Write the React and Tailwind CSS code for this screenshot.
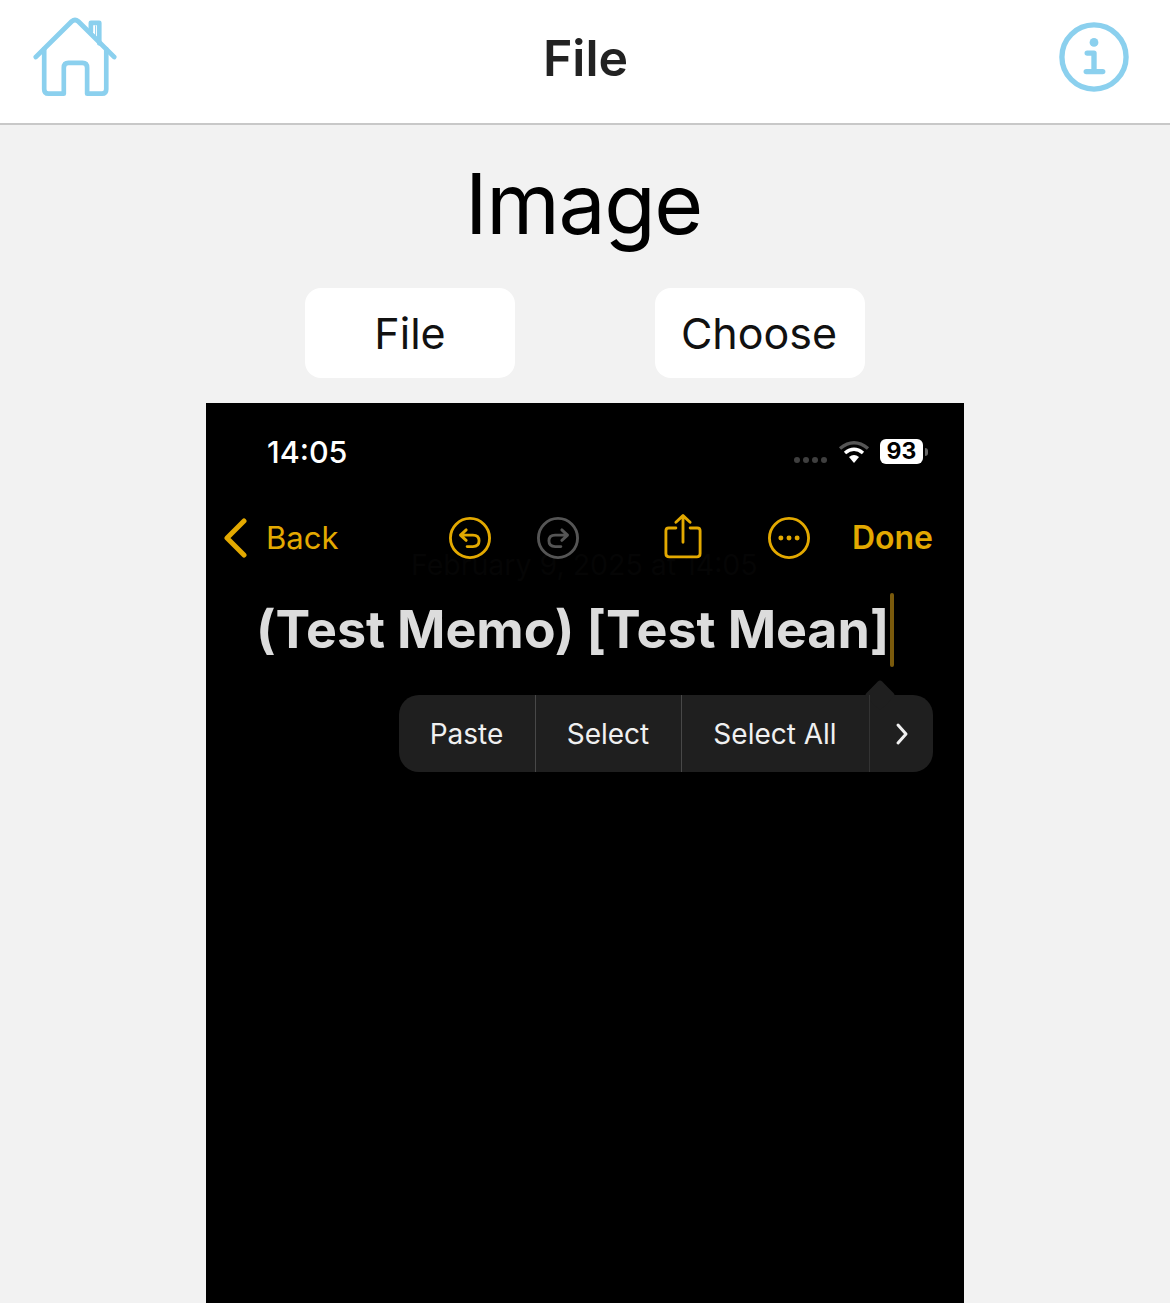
import React from "react";

const gold = "#e3a900";

function HomeIcon() {
  return (
    <svg width="84" height="82" viewBox="0 0 90 84" preserveAspectRatio="none" fill="none" stroke="#8bd0ee" strokeWidth="5" strokeLinecap="round" strokeLinejoin="round" className="block">
      <path d="M3 41 L41.5 4.5 Q45 1.500 48.500 4.500 L87 41" />
      <path d="M12 33 V74 Q12 78.500 16.500 78.500 H33 V52 Q33 47 38 47 H53 Q58 47 58 52 V78.500 H74 Q78.500 78.500 78.500 74 V33" />
      <path d="M62 15 V6 H71 V27" />
      <path d="M67 9 V21" strokeWidth="1" />
    </svg>
  );
}

function InfoIcon() {
  return (
    <svg width="70" height="70" viewBox="0 0 72 72" fill="none" stroke="#8bd0ee" className="block">
      <circle cx="36" cy="36" r="33" strokeWidth="5.500" />
      <circle cx="36" cy="21" r="4.500" fill="#8bd0ee" stroke="none" />
      <path d="M29 32 H36 V51 M28 51 H45" strokeWidth="5.500" strokeLinecap="round" strokeLinejoin="round" />
    </svg>
  );
}

function CircleArrow({ color, flip }) {
  return (
    <svg width="42" height="42" viewBox="0 0 44 44" fill="none" stroke={color} strokeWidth="3" strokeLinecap="round" strokeLinejoin="round" className="block" style={flip ? { transform: "scaleX(-1)" } : undefined}>
      <circle cx="22" cy="22" r="20.500" />
      <path d="M18 13.500 L12 19 L18 24.500 M12.500 19 H25 Q31.500 19 31.500 25 Q31.500 31 25 31 H19" />
    </svg>
  );
}

function ShareIcon() {
  return (
    <svg width="38" height="47" viewBox="0 0 40 48" fill="none" stroke={gold} strokeWidth="3" strokeLinecap="round" strokeLinejoin="round" className="block">
      <path d="M12.500 15 H5 Q2 15 2 18 V42 Q2 45.500 5.500 45.500 H34.500 Q38 45.500 38 42 V18 Q38 15 35 15 H27.500" />
      <path d="M20 30 V2 M12.500 9 L20 2 L27.500 9" />
    </svg>
  );
}

function MoreIcon() {
  return (
    <svg width="42" height="42" viewBox="0 0 44 44" fill="none" className="block">
      <circle cx="22" cy="22" r="20.500" stroke={gold} strokeWidth="3" />
      <circle cx="13.500" cy="22" r="2.600" fill={gold} />
      <circle cx="22" cy="22" r="2.600" fill={gold} />
      <circle cx="30.500" cy="22" r="2.600" fill={gold} />
    </svg>
  );
}

function WifiIcon() {
  return (
    <svg width="32" height="24" viewBox="0 0 32 24" fill="none" className="block">
      <path d="M2 8.500 Q16 -3 30 8.500" stroke="#555" strokeWidth="3.500" />
      <path d="M7 13 Q16 5.500 25 13" stroke="#fff" strokeWidth="3.500" />
      <path d="M11 17 L16 23 L21 17 Q16 13 11 17 Z" fill="#fff" />
    </svg>
  );
}

export default function App() {
  return (
    <div className="h-[1303px] overflow-hidden bg-[#f2f2f2] text-black font-['Inter',sans-serif]">
      <header className="grid h-[125px] grid-cols-[1fr_auto_1fr] items-center border-b-2 border-[#c8c8c8] bg-white pb-[7px] pl-[33px] pr-[41px]">
        <div className="justify-self-start"><HomeIcon /></div>
        <h1 className="ml-[9px] text-[50px] font-semibold leading-none text-[#222]">File</h1>
        <div className="-mt-[2px] justify-self-end"><InfoIcon /></div>
      </header>

      <h2 className="mt-[28px] pr-[3px] text-center text-[84px] font-normal leading-[102px] tracking-[-1.400px] text-black">Image</h2>

      <div className="mt-[33px] flex justify-center gap-[140px]">
        <button className="h-[90px] w-[210px] rounded-[16px] bg-white text-[43px] text-[#111]">File</button>
        <button className="h-[90px] w-[210px] rounded-[16px] bg-white pr-[2px] text-[43px] text-[#111]">Choose</button>
      </div>

      <div className="mx-auto mt-[25px] h-[900px] w-[758px] bg-black">
        <div className="flex items-start justify-between pl-[61px] pr-[36px] pt-[31px]">
          <span className="text-[30.500px] font-medium leading-[36px] text-white">14:05</span>
          <div className="mt-[5px] flex items-center">
            <div className="mr-[11px] mt-[17px] flex gap-[3px]">
              <span className="h-[6px] w-[6px] rounded-full bg-[#3f3f3f]" />
              <span className="h-[6px] w-[6px] rounded-full bg-[#3f3f3f]" />
              <span className="h-[6px] w-[6px] rounded-full bg-[#3f3f3f]" />
              <span className="h-[6px] w-[6px] rounded-full bg-[#3f3f3f]" />
            </div>
            <WifiIcon />
            <span className="ml-[10px] flex h-[25px] w-[43px] items-center justify-center rounded-[6px] bg-white text-[23px] font-bold leading-none text-black">93</span>
            <span className="ml-[2px] h-[8px] w-[3px] rounded-r-full bg-[#666]" />
          </div>
        </div>

        <div className="relative isolate mt-[43px] flex h-[50px] items-center pl-[18px] pr-[31px]">
          <svg width="24" height="40" viewBox="0 0 24 40" fill="none" stroke={gold} strokeWidth="5" strokeLinecap="round" strokeLinejoin="round" className="block">
            <path d="M20 3 L3 20 L20 37" />
          </svg>
          <span className="-mt-[2px] ml-[18px] w-[72px] whitespace-nowrap text-[31px] leading-none text-[#e3a900]">Back</span>
          <div className="ml-[111px]"><CircleArrow color={gold} /></div>
          <div className="ml-[46px]"><CircleArrow color="#555555" flip /></div>
          <div className="ml-[85px] -mt-[4px]"><ShareIcon /></div>
          <div className="ml-[66px]"><MoreIcon /></div>
          <span className="ml-auto text-[32px] font-semibold leading-none text-[#e3a900]">Done</span>
          <span className="absolute left-[205px] top-[38px] -z-10 whitespace-nowrap text-[28.500px] leading-none text-[#050505]">February 9, 2025 at 14:05</span>
        </div>

        <div className="mt-[29px] flex h-[75px] items-center pl-[50px]">
          <span className="whitespace-nowrap text-[52px] font-bold leading-none tracking-[-0.100px] text-[#dcdcdc]">(Test Memo) [Test Mean]</span>
          <span className="ml-[1px] h-[74px] w-[4px] rounded-full bg-[#7a5a0c]" />
        </div>

        <div className="relative ml-[193px] mt-[28px] flex h-[77px] w-[534px] items-center rounded-[20px] bg-[#1f1f1f] text-[28px] text-[#f0f0f0]">
          <span className="absolute -top-[11px] left-[470px] h-[22px] w-[22px] rotate-45 rounded-[3px] bg-[#1f1f1f]" />
          <div className="relative flex h-full w-[137px] items-center justify-center border-r border-[#484848] pr-[1px]">Paste</div>
          <div className="relative flex h-full w-[146px] items-center justify-center border-r border-[#484848] pr-[1px]">Select</div>
          <div className="relative flex h-full w-[188px] items-center justify-center border-r border-[#333] pr-[1px]">Select All</div>
          <div className="relative flex h-full flex-1 items-center justify-center">
            <svg width="14" height="24" viewBox="0 0 14 24" fill="none" stroke="#f0f0f0" strokeWidth="3" strokeLinecap="round" strokeLinejoin="round" className="block">
              <path d="M3 3 L11 12 L3 21" />
            </svg>
          </div>
        </div>
      </div>
    </div>
  );
}
